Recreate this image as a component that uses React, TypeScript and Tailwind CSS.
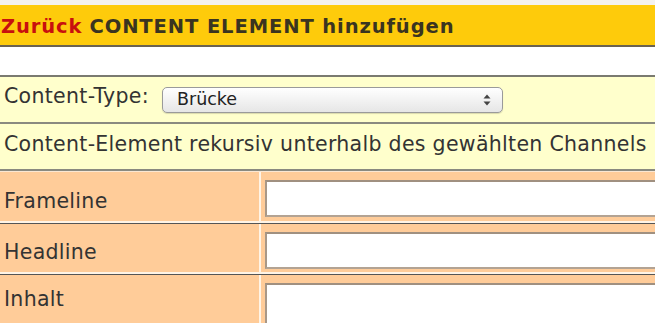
import React from "react";

type FieldRow = {
  label: string;
  labelPad: string;
  inputHeight: string;
  rowHeight: string;
};

const fieldRows: FieldRow[] = [
  { label: "Frameline", labelPad: "pt-[14px]", inputHeight: "h-[37px]", rowHeight: "h-[49px]" },
  { label: "Headline", labelPad: "pt-[13px]", inputHeight: "h-[37px]", rowHeight: "h-[48px]" },
  { label: "Inhalt", labelPad: "pt-[9px]", inputHeight: "h-[80px]", rowHeight: "h-[60px]" },
];

function SelectArrows() {
  return (
    <svg viewBox="0 0 8 12" className="h-[12px] w-[8px]" aria-hidden="true">
      <path d="M4 0.5 L7.5 4.5 L0.5 4.5 Z" fill="#444" />
      <path d="M4 11.5 L7.5 7.5 L0.5 7.5 Z" fill="#444" />
    </svg>
  );
}

function FakeSelect({ value }: { value: string }) {
  return (
    <div className="mt-[10px] flex h-[26px] w-[341px] items-center justify-between rounded-[5px] border border-[#9a9a9a] bg-gradient-to-b from-white to-[#e6e6e6] pl-[14px] pr-[11px] text-[17.5px] leading-none tracking-normal text-[#222] shadow-[0_1px_1px_rgba(0,0,0,0.15)]">
      <span>{value}</span>
      <SelectArrows />
    </div>
  );
}

function Field({ row, last }: { row: FieldRow; last: boolean }) {
  return (
    <div className={last ? "" : "border-b border-[#555]"}>
      <div className={`flex ${row.rowHeight} overflow-hidden bg-[#ffcc99]`}>
        <div className={`w-[259px] shrink-0 pl-[4px] ${row.labelPad}`}>{row.label}</div>
        <div className="w-[2px] shrink-0 bg-[#fff4e6]" />
        <div className="flex-1 pl-[4px] pt-[8px]">
          <div
            className={`${row.inputHeight} w-[420px] border-2 border-[#b3a393] border-t-[#a09080] border-l-[#a89888] bg-white`}
          />
        </div>
      </div>
      {!last && <div className="h-[2px] bg-[#fff4e6]" />}
    </div>
  );
}

export default function App() {
  return (
    <div className="h-[323px] w-[655px] overflow-hidden bg-white font-['DejaVu_Sans',sans-serif] text-[20.5px] tracking-[0.3px] text-[#333]">
      <div className="h-[5px] bg-[#f4f2ee]" />
      <div className="flex h-[42px] items-center whitespace-nowrap border-b-2 border-[#6b6250] bg-[#fecb0b] pl-px pt-[4px] text-[19.5px] font-bold tracking-[0.9px]">
        <span className="text-[#c8100e]">Zurück</span>
        <span className="ml-[7px] text-[#3a3420]">CONTENT ELEMENT hinzufügen</span>
      </div>
      <div className="h-[28px]" />
      <div className="border-t-2 border-[#7a7a70]">
        <div className="flex h-[47px] items-start gap-[13px] border-b-2 border-[#8a8a80] bg-[#ffffcc] pl-[4px]">
          <span className="pt-[4px]">Content-Type:</span>
          <FakeSelect value="Brücke" />
        </div>
        <div className="h-[47px] whitespace-nowrap border-b-2 border-[#8a8a80] bg-[#ffffcc] pl-[4px] pt-[5px]">
          Content-Element rekursiv unterhalb des gewählten Channels
        </div>
        <div className="h-px bg-[#fbe7d2]" />
        {fieldRows.map((row, i) => (
          <Field key={row.label} row={row} last={i === fieldRows.length - 1} />
        ))}
      </div>
    </div>
  );
}
